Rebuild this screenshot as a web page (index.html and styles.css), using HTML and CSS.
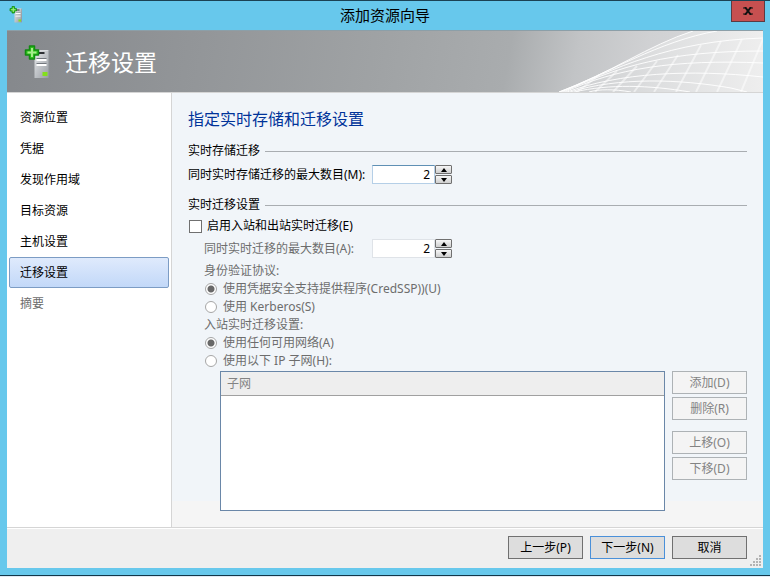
FILE: index.html
```html
<!DOCTYPE html>
<html lang="zh-CN">
<head>
    <meta charset="UTF-8">
    <meta name="viewport" content="width=device-width, initial-scale=1.0">
    <title>添加资源向导</title>
    <link rel="stylesheet" href="styles.css">
</head>
<body>
    <!-- Server icon, used in the title bar and in the banner -->
    <svg class="icon-defs" width="0" height="0" aria-hidden="true">
        <defs>
            <linearGradient id="serverFill" x1="0" y1="0" x2="1" y2="1">
                <stop offset="0" stop-color="#e6e8ea"/>
                <stop offset="1" stop-color="#989da3"/>
            </linearGradient>
            <symbol id="server" viewBox="0 0 26 34">
                <path d="M10 6 L12 5 H25 L23 7 Z" fill="#d9dcdf"/>
                <path d="M23 6 L25 5 V31 L23 33 Z" fill="#8b9095"/>
                <rect x="10" y="6" width="14" height="27" fill="url(#serverFill)"/>
                <path d="M13 8 H20" stroke="#2d3034" stroke-width="2"/>
                <path d="M12 13.500 H22 M12 18.500 H22" stroke="#73787e" stroke-width="1"/>
                <path d="M12 15 H22 M12 20 H22" stroke="#fff" stroke-width="2"/>
                <rect x="18" y="27" width="5" height="4" fill="#83e01c"/>
                <path d="M5 1 H10 V5 H14 V10 H10 V14 H5 V10 H1 V5 H5 Z" fill="#2fc41c" stroke="#138a12" stroke-width="1.500" stroke-linejoin="round"/>
                <path d="M7.500 3 V12 M3 7.500 H12" stroke="#a5ee8a" stroke-width="2"/>
            </symbol>
        </defs>
    </svg>

    <div class="window">
        <header class="titlebar">
            <svg class="titlebar-icon"><use href="#server"/></svg>
            <h1>添加资源向导</h1>
            <button type="button" class="close" aria-label="关闭">
                <svg width="10" height="8" viewBox="0 0 10 8"><path d="M0 1 H3 M7 1 H10 M0 7 H3 M7 7 H10" stroke="#111" stroke-width="1"/><path d="M2 0 L8 8 M8 0 L2 8" stroke="#111" stroke-width="2"/></svg>
            </button>
        </header>

        <div class="banner">
            <svg class="banner-icon"><use href="#server"/></svg>
            <span>迁移设置</span>
            <svg class="mesh" width="204" height="61" viewBox="0 0 204 61" fill="none" stroke="#fff">
                <defs>
                    <linearGradient id="meshFill" x1="0" y1="0" x2="1" y2="0">
                        <stop offset="0" stop-color="#c9cbcd"/>
                        <stop offset=".5" stop-color="#dedfe0"/>
                        <stop offset="1" stop-color="#eeeeee"/>
                    </linearGradient>
                </defs>
                <path d="M0 61 C50 43 90 14 134 0 H204 V61 Z" fill="url(#meshFill)" stroke="none"/>
                <g stroke-opacity=".9">
                    <path d="M0 61 C50 43 90 14 134 0"/>
                    <path d="M0 61 C50 42 100 10 158 0"/>
                    <path d="M2 61 C55 38 110 10 204 7"/>
                    <path d="M4 61 C60 35 110 20 204 20"/>
                    <path d="M6 61 C55 38 115 28 204 32"/>
                    <path d="M8 61 C60 42 130 38 204 46"/>
                    <path d="M11 61 C60 46 120 48 172 57 L188 61"/>
                    <path d="M15 61 C50 53 90 54 131 61"/>
                    <path d="M30 61 C40 58 55 58 72 61"/>
                </g>
                <g stroke-width="2" stroke-opacity=".5">
                    <path d="M18 61 L40 44 M36 61 L58 40 M54 61 L78 35"/>
                    <path d="M75 61 L98 30 M95 61 L119 24"/>
                    <path d="M117 61 L142 14 M137 61 L162 10"/>
                    <path d="M158 61 L183 8 M182 61 L204 8"/>
                </g>
            </svg>
        </div>

        <div class="content">
            <nav class="steps">
                <a href="#">资源位置</a>
                <a href="#">凭据</a>
                <a href="#">发现作用域</a>
                <a href="#">目标资源</a>
                <a href="#">主机设置</a>
                <a href="#" class="current">迁移设置</a>
                <a href="#" class="pending">摘要</a>
            </nav>

            <main class="settings">
                <h2>指定实时存储和迁移设置</h2>

                <h3>实时存储迁移</h3>
                <div class="number-row storage-row">
                    <label for="maxStorage">同时实时存储迁移的最大数目(M):</label>
                    <input type="text" id="maxStorage" class="active" value="2">
                    <div class="spinner">
                        <button type="button" class="up" aria-label="增加"></button>
                        <button type="button" class="down" aria-label="减少"></button>
                    </div>
                </div>

                <h3>实时迁移设置</h3>
                <div class="option enable">
                    <input type="checkbox" id="enableMigration">
                    <label for="enableMigration">启用入站和出站实时迁移(E)</label>
                </div>

                <div class="migration">
                    <div class="number-row">
                        <label for="maxMigration">同时实时迁移的最大数目(A):</label>
                        <input type="text" id="maxMigration" value="2">
                        <div class="spinner">
                            <button type="button" class="up" aria-label="增加"></button>
                            <button type="button" class="down" aria-label="减少"></button>
                        </div>
                    </div>

                    <p>身份验证协议:</p>
                    <div class="option">
                        <input type="radio" id="credssp" name="auth" checked disabled>
                        <label for="credssp">使用凭据安全支持提供程序(CredSSP))(U)</label>
                    </div>
                    <div class="option">
                        <input type="radio" id="kerberos" name="auth" disabled>
                        <label for="kerberos">使用 Kerberos(S)</label>
                    </div>

                    <p>入站实时迁移设置:</p>
                    <div class="option">
                        <input type="radio" id="anyNetwork" name="network" checked disabled>
                        <label for="anyNetwork">使用任何可用网络(A)</label>
                    </div>
                    <div class="option">
                        <input type="radio" id="subnets" name="network" disabled>
                        <label for="subnets">使用以下 IP 子网(H):</label>
                    </div>

                    <div class="subnets">
                        <div class="subnet-list">
                            <table>
                                <thead>
                                    <tr><th>子网</th></tr>
                                </thead>
                            </table>
                        </div>
                        <div class="subnet-buttons">
                            <button type="button" class="btn" disabled>添加(D)</button>
                            <button type="button" class="btn" disabled>删除(R)</button>
                            <button type="button" class="btn move" disabled>上移(O)</button>
                            <button type="button" class="btn" disabled>下移(D)</button>
                        </div>
                    </div>
                </div>
            </main>
        </div>

        <footer class="actions">
            <button type="button" class="btn">上一步(P)</button>
            <button type="button" class="btn default">下一步(N)</button>
            <button type="button" class="btn">取消</button>
            <svg class="grip" width="12" height="12" viewBox="0 0 12 12" fill="#b3b3b3">
                <path d="M9 0h2v2h-2z M6 3h2v2h-2z M9 3h2v2h-2z M3 6h2v2h-2z M6 6h2v2h-2z M9 6h2v2h-2z M0 9h2v2h-2z M3 9h2v2h-2z M6 9h2v2h-2z M9 9h2v2h-2z"/>
            </svg>
        </footer>
    </div>
</body>
</html>
```
FILE: styles.css
```css
* {
    box-sizing: border-box;
}

body {
    margin: 0;
    min-height: 100vh;
    display: flex;
    flex-direction: column;
    padding-bottom: 1px;
    background-color: #dfe9f5;
    font-family: "Noto Sans", "Noto Sans CJK SC", sans-serif;
    font-size: 12px;
    line-height: 18px;
    color: #000;
}

h1, h2, h3, p {
    margin: 0;
    font-weight: normal;
}

button, input {
    font: inherit;
    color: inherit;
    margin: 0;
}

.icon-defs {
    position: absolute;
}

.window {
    flex: 1;
    display: flex;
    flex-direction: column;
    padding: 0 7px 7px;
    background-color: #67c8ec;
    border-top: 1px solid #1b4254;
    border-bottom: 1px solid #123648;
}

/* Title bar */
.titlebar {
    position: relative;
    display: flex;
    justify-content: center;
    height: 29px;
}

.titlebar h1 {
    font-size: 15px;
    line-height: 28px;
}

.titlebar-icon {
    position: absolute;
    left: 2px;
    top: 5px;
    width: 14px;
    height: 17px;
}

.close {
    position: absolute;
    right: -2px;
    top: 0;
    width: 34px;
    height: 21px;
    padding: 0;
    display: flex;
    align-items: center;
    justify-content: center;
    background-color: #c75050;
    border: 1px solid #5c3a42;
    border-top: none;
}

/* Banner */
.banner {
    position: relative;
    display: flex;
    align-items: center;
    height: 62px;
    padding: 0 18px 0 17px;
    gap: 14px;
    background: linear-gradient(100deg, #85888c 0%, #a0a3a5 50%, #a9acae 66%, #c2c4c6 75%, #d0d1d3 84%, #dcdddf 100%);
    border-top: 1px solid #8c9fa8;
    color: #fff;
    font-size: 23px;
}

.banner-icon {
    width: 27px;
    height: 34px;
}

.mesh {
    position: absolute;
    right: 0;
    top: 0;
}

/* Content */
.content {
    flex: 1;
    display: flex;
    border-top: 1px solid #d5d5d5;
}

.steps {
    width: 165px;
    padding: 9px 2px;
    background-color: #fff;
    border-right: 1px solid #d5d5d5;
}

.steps a {
    display: block;
    height: 31px;
    padding: 0 10px;
    border: 1px solid transparent;
    line-height: 29px;
    color: #000;
    text-decoration: none;
}

.steps .current {
    background: linear-gradient(#dfeafc, #c2d8f8);
    border-color: #7c9cc4;
    border-radius: 2px;
}

.steps .pending {
    color: #6d6d6d;
}

.settings {
    flex: 1;
    padding: 16px;
    background: linear-gradient(#f1f5f9 0%, #f1f5f9 94%, #f5f5f5 94%);
}

.settings h2 {
    font-size: 16px;
    line-height: 20px;
    margin-bottom: 13px;
    color: #003399;
}

.settings h3 {
    display: flex;
    align-items: center;
    gap: 5px;
    font-size: 12px;
}

.settings h3::after {
    content: "";
    flex: 1;
    height: 1px;
    background-color: #a9adb1;
}

.number-row {
    display: flex;
    align-items: center;
    height: 19px;
}

.storage-row {
    margin: 5px 0 12px;
}

.number-row label {
    width: 168px;
    line-height: 20px;
    white-space: nowrap;
}

.storage-row label {
    width: 184px;
}

.number-row input {
    width: 63px;
    height: 19px;
    padding: 0 4px;
    border: 1px solid #dfe3e8;
    background-color: #fff;
    color: #000;
    text-align: right;
}

.number-row .active {
    border-color: #5f90b4 #b5cfe7 #b5cfe7;
}

.spinner {
    display: flex;
    flex-direction: column;
    gap: 1px;
    width: 17px;
}

.spinner button {
    display: flex;
    align-items: center;
    justify-content: center;
    height: 9px;
    padding: 0;
    background: linear-gradient(#f6f6f6, #cfcfcf);
    border: 1px solid #707070;
    border-radius: 1px;
}

.spinner button::before {
    content: "";
    border: 3px solid transparent;
}

.spinner .up::before {
    border-top-width: 0;
    border-bottom: 4px solid #000;
}

.spinner .down::before {
    border-bottom-width: 0;
    border-top: 4px solid #000;
}

.option {
    display: flex;
    align-items: center;
    gap: 6px;
    height: 18px;
}

.option input {
    appearance: none;
    width: 13px;
    height: 13px;
    background-color: #fff;
    border: 1px solid #707070;
}

.option input[type="radio"] {
    width: 12px;
    height: 12px;
    margin-left: 1px;
    border-color: #a6a6a6;
    border-radius: 50%;
}

.option input[type="radio"]:checked {
    background: radial-gradient(circle, #686868 3px, #fff 4px);
}

.option input[type="checkbox"]:checked {
    background-color: #707070;
}

.enable {
    margin: 3px 0 4px;
    padding-left: 1px;
    gap: 5px;
}

.migration {
    padding-left: 16px;
    color: #6d6d6d;
}

.migration .number-row {
    margin-bottom: 4px;
}

/* Subnet table */
.subnets {
    display: flex;
    gap: 7px;
    margin: 1px 0 0 16px;
}

.subnet-list {
    flex: 1;
    height: 140px;
    background-color: #fff;
    border: 1px solid #6a87a8;
}

.subnet-list table {
    width: 100%;
    border-collapse: collapse;
}

.subnet-list th {
    height: 23px;
    padding: 2px 6px 0;
    background-color: #eee;
    border-bottom: 1px solid #a0a0a0;
    color: #838383;
    font-weight: normal;
    text-align: left;
}

.subnet-buttons {
    display: flex;
    flex-direction: column;
    gap: 3px;
}

.btn {
    width: 75px;
    height: 23px;
    padding: 0;
    background-color: #ddd;
    border: 1px solid #707070;
}

.btn:disabled {
    background-color: #f4f4f4;
    border-color: #adb2b5;
    color: #838383;
}

.btn.default {
    border-color: #4a90d9;
}

.move {
    margin-top: 8px;
}

/* Footer */
.actions {
    position: relative;
    display: flex;
    justify-content: flex-end;
    gap: 7px;
    padding: 8px 16px 9px;
    background-color: #efefef;
    border-top: 1px solid #d5d5d5;
    box-shadow: inset 0 1px #fff;
}

.grip {
    position: absolute;
    right: 1px;
    bottom: 1px;
}
```
